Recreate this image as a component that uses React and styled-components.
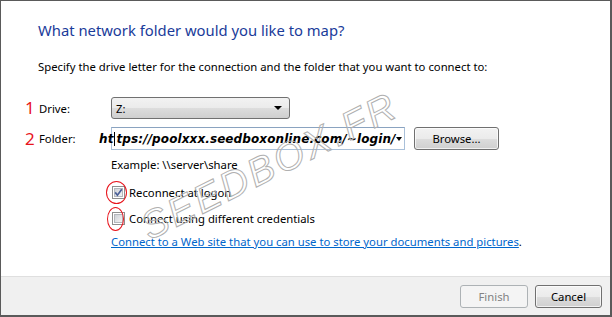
import React from 'react';
import styled, { createGlobalStyle } from 'styled-components';

const Global = createGlobalStyle`
	html, body {
		margin: 0;
		padding: 0;
		background: #ffffff;
	}
	body {
		font-family: 'Noto Sans', 'Open Sans', sans-serif;
		font-size: 11.3px;
		color: #000000;
	}
`;

const Window = styled.div`
	position: relative;
	box-sizing: border-box;
	width: 612px;
	height: 317px;
	display: flex;
	flex-direction: column;
	background: #ffffff;
	border-style: solid;
	border-color: #5a5a5a;
	border-width: 1px 2px 2px 1px;
	overflow: hidden;
`;

const Content = styled.div`
	flex: 1;
	padding: 18px 0 0 37px;
`;

const Title = styled.h1`
	margin: 0;
	font-size: 14.8px;
	font-weight: normal;
	color: #1a3b9a;
	line-height: 22px;
`;

const Instruction = styled.p`
	margin: 18px 0 0;
	font-size: 11.3px;
	line-height: 16px;
`;

const Form = styled.div`
	display: grid;
	grid-template-columns: 86px auto;
	row-gap: 8px;
	margin: 22px 0 0 -13px;
	align-items: center;
`;

const FieldLabel = styled.div`
	display: flex;
	align-items: center;
	gap: 3px;
	font-size: 11.3px;
`;

const Step = styled.span`
	width: 11px;
	color: #e8141c;
	font-size: 17px;
	line-height: 20px;
`;

const Select = styled.div`
	box-sizing: border-box;
	width: 179px;
	height: 22px;
	display: flex;
	align-items: center;
	justify-content: space-between;
	padding: 0 7px 0 4px;
	border: 1px solid #707070;
	border-radius: 3px;
	background: linear-gradient(#f2f2f2 0%, #ebebeb 50%, #dddddd 51%, #cfcfcf 100%);
	font-size: 11.3px;
`;

const Arrow = styled.span`
	width: 0;
	height: 0;
	border-left: 4px solid transparent;
	border-right: 4px solid transparent;
	border-top: 4px solid #000000;
`;

const FolderRow = styled.div`
	display: flex;
	align-items: center;
	gap: 9px;
`;

const Combo = styled.div`
	position: relative;
	box-sizing: border-box;
	width: 294px;
	height: 23px;
	display: flex;
	align-items: center;
	justify-content: space-between;
	padding-right: 4px;
	border: 1px solid #a9c0d9;
	border-top-color: #8aa3c0;
	background: #ffffff;
	overflow: visible;
`;

const Url = styled.span`
	margin-left: -13px;
	font-family: 'DejaVu Sans', Verdana, sans-serif;
	font-size: 12px;
	font-weight: bold;
	font-style: italic;
	letter-spacing: 0.1px;
	white-space: nowrap;
`;

const Caret = styled.span`
	display: inline-block;
	width: 1px;
	height: 14px;
	margin: 0 1px;
	vertical-align: -3px;
	background: #000000;
`;

const SmallArrow = styled(Arrow)`
	border-left-width: 3px;
	border-right-width: 3px;
	border-top-width: 4px;
`;

const Button = styled.button`
	box-sizing: border-box;
	width: ${p => p.$w || 68}px;
	height: 23px;
	padding: 0;
	border: 1px solid ${p => (p.disabled ? '#adb2b5' : '#707070')};
	border-radius: 3px;
	background: ${p =>
		p.disabled
			? '#f4f4f4'
			: 'linear-gradient(#f2f2f2 0%, #ebebeb 50%, #dddddd 51%, #cfcfcf 100%)'};
	box-shadow: inset 0 0 0 1px ${p => (p.disabled ? '#f4f4f4' : 'rgba(255,255,255,0.7)')};
	color: ${p => (p.disabled ? '#838383' : '#000000')};
	font-family: 'Noto Sans', 'Open Sans', sans-serif;
	font-size: 11.3px;
`;

const Options = styled.div`
	display: flex;
	flex-direction: column;
	margin-left: 73px;
	padding-top: 7px;
`;

const Example = styled.div`
	font-size: 11.3px;
	line-height: 16px;
`;

const CheckRow = styled.label`
	position: relative;
	display: flex;
	align-items: center;
	gap: 4px;
	height: 13px;
	margin-top: ${p => p.$top}px;
	margin-left: 1px;
	font-size: 11.3px;
`;

const Ring = styled.span`
	position: absolute;
	left: ${p => p.$left}px;
	top: ${p => p.$top}px;
	width: ${p => p.$w}px;
	height: ${p => p.$h}px;
	border: 1px solid #e8141c;
	border-radius: 50%;
	pointer-events: none;
`;

const LinkLine = styled.div`
	margin-top: 9px;
	font-size: 11.3px;
	line-height: 16px;

	a {
		color: #0066cc;
		text-decoration: underline;
	}
`;

const Footer = styled.div`
	height: 38px;
	display: flex;
	align-items: center;
	justify-content: flex-end;
	gap: 7px;
	padding-right: 8px;
	background: #f0f0f0;
	border-top: 1px solid #dfdfdf;
`;

const Watermark = styled.div`
	position: absolute;
	left: 128px;
	top: 143px;
	transform: rotate(-26.5deg);
	transform-origin: center;
	font-family: 'Liberation Sans', Arial, sans-serif;
	font-size: 39px;
	font-style: italic;
	letter-spacing: 3px;
	color: transparent;
	-webkit-text-stroke: 1px #b0b0b0;
	white-space: nowrap;
	pointer-events: none;
`;

function Checkbox({ checked }) {
	const id = checked ? 'cbOn' : 'cbOff';
	return (
		<svg width="13" height="13" viewBox="0 0 13 13">
			<defs>
				<linearGradient id={id} x1="0" y1="0" x2="1" y2="1">
					<stop offset="0" stopColor="#cbcfd5" />
					<stop offset="1" stopColor="#f6f6f6" />
				</linearGradient>
			</defs>
			<rect x="0.5" y="0.5" width="12" height="12" fill="#ffffff" stroke="#8e8f8f" />
			<rect x="2.5" y="2.5" width="8" height="8" fill={`url(#${id})`} stroke="#b4b8bd" />
			{checked && (
				<path d="M3.2 6.4 L5.4 9.2 L9.8 3.2" fill="none" stroke="#4a5f97" strokeWidth="1.7" />
			)}
		</svg>
	);
}

export default function App() {
	return (
		<>
			<Global />
			<Window>
				<Content>
					<Title>What network folder would you like to map?</Title>
					<Instruction>
						Specify the drive letter for the connection and the folder that you want to connect to:
					</Instruction>
					<Form>
						<FieldLabel>
							<Step>1</Step>Drive:
						</FieldLabel>
						<Select>
							Z:
							<Arrow />
						</Select>
						<FieldLabel>
							<Step>2</Step>Folder:
						</FieldLabel>
						<FolderRow>
							<Combo>
								<Url>
									ht<Caret />tps://poolxxx.seedboxonline.com/~login/
								</Url>
								<SmallArrow />
							</Combo>
							<Button $w={85}>Browse...</Button>
						</FolderRow>
					</Form>
					<Options>
						<Example>Example: \\server\share</Example>
						<CheckRow $top={13}>
							<Checkbox checked />
							Reconnect at logon
							<Ring $left={-6} $top={-5} $w={19} $h={21} />
						</CheckRow>
						<CheckRow $top={13}>
							<Checkbox />
							Connect using different credentials
							<Ring $left={-5} $top={-5} $w={15} $h={22} />
						</CheckRow>
						<LinkLine>
							<a>Connect to a Web site that you can use to store your documents and pictures</a>.
						</LinkLine>
					</Options>
				</Content>
				<Footer>
					<Button disabled>Finish</Button>
					<Button $w={67}>Cancel</Button>
				</Footer>
				<Watermark>SEEDBOX.FR</Watermark>
			</Window>
		</>
	);
}
